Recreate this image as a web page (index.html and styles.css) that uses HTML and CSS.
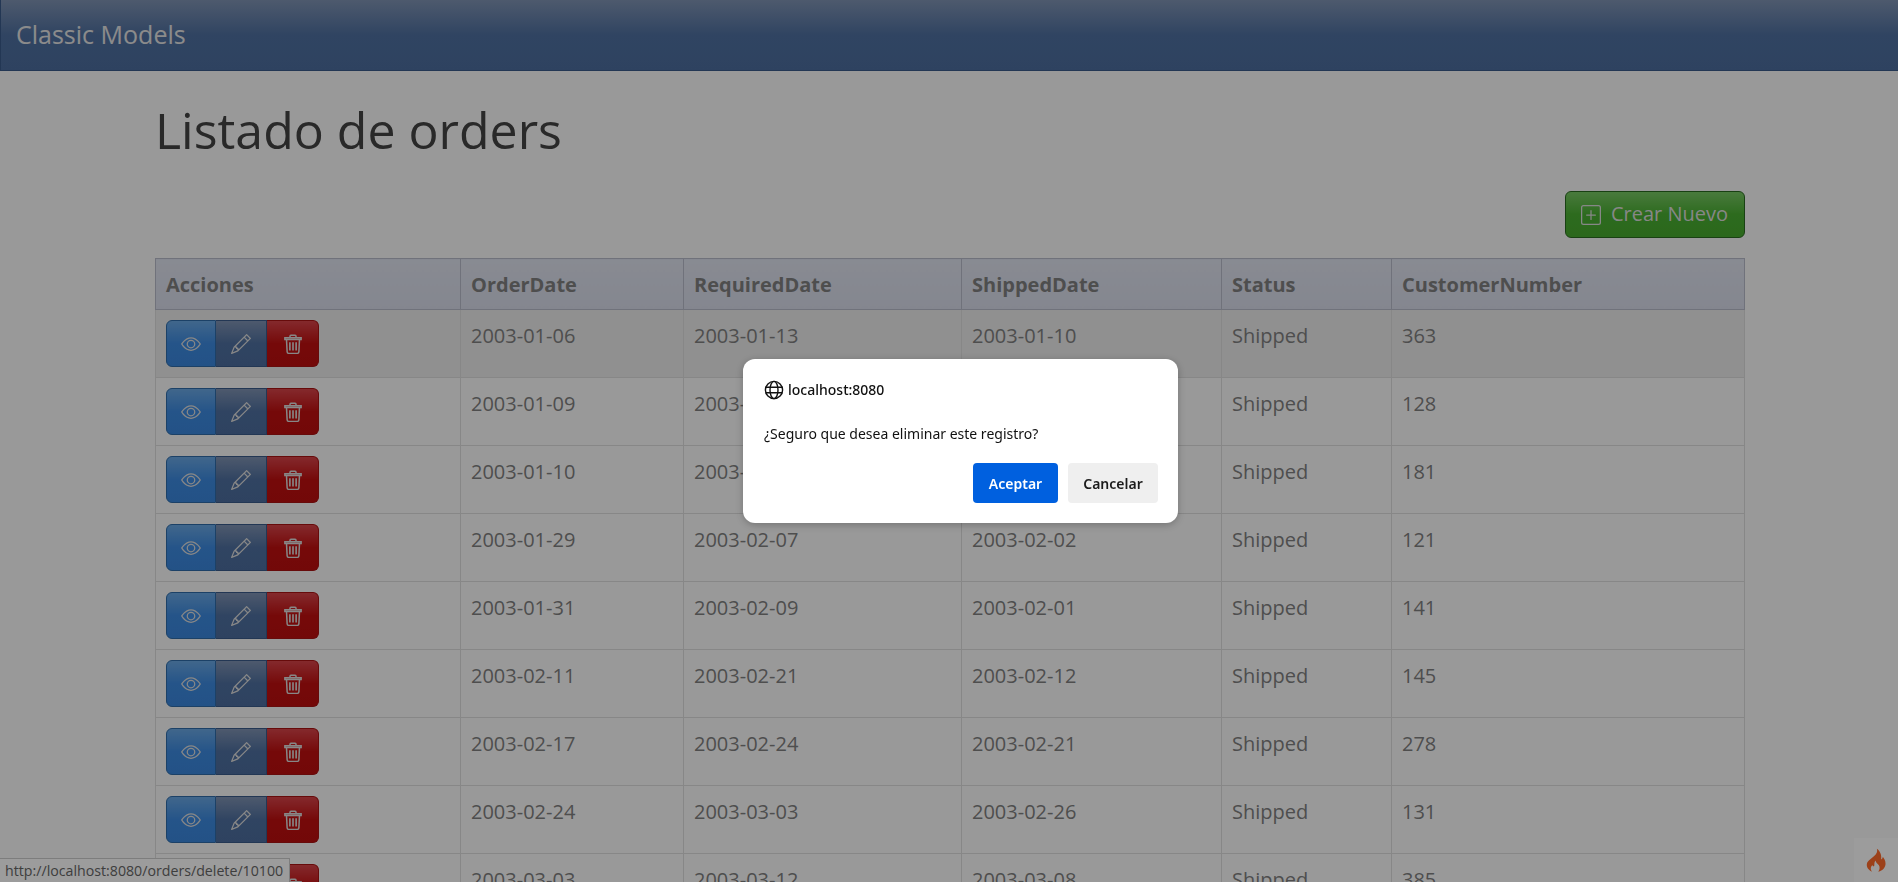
FILE: index.html
```html
<!DOCTYPE html>
<html lang="es">
<head>
  <meta charset="UTF-8" />
  <meta name="viewport" content="width=device-width, initial-scale=1.0"/>
  <title>Classic Models | Orders</title>
  <link rel="stylesheet" href="styles.css">
</head>
<body>

<svg class="icon-defs" width="0" height="0">
  <symbol id="i-eye" viewBox="0 0 16 16">
    <path fill="currentColor" d="M16 8s-3-5.5-8-5.5S0 8 0 8s3 5.5 8 5.5S16 8 16 8zM1.173 8a13.133 13.133 0 0 1 1.66-2.043C4.12 4.668 5.88 3.5 8 3.5c2.12 0 3.879 1.168 5.168 2.457A13.133 13.133 0 0 1 14.828 8c-.058.087-.122.183-.195.288-.335.48-.83 1.12-1.465 1.755C11.879 11.332 10.119 12.5 8 12.5c-2.12 0-3.879-1.168-5.168-2.457A13.134 13.134 0 0 1 1.172 8z"/>
    <path fill="currentColor" d="M8 5.5a2.5 2.5 0 1 0 0 5 2.5 2.5 0 0 0 0-5zM4.5 8a3.5 3.5 0 1 1 7 0 3.5 3.5 0 0 1-7 0z"/>
  </symbol>
  <symbol id="i-pencil" viewBox="0 0 16 16">
    <path fill="currentColor" d="M12.146.146a.5.5 0 0 1 .708 0l3 3a.5.5 0 0 1 0 .708l-10 10a.5.5 0 0 1-.168.11l-5 2a.5.5 0 0 1-.65-.65l2-5a.5.5 0 0 1 .11-.168l10-10zM11.207 2.5 13.5 4.793 14.793 3.5 12.5 1.207 11.207 2.5zm1.586 3L10.5 3.207 4 9.707V10h.5a.5.5 0 0 1 .5.5v.5h.5a.5.5 0 0 1 .5.5v.5h.293l6.5-6.5zm-9.761 5.175-.106.106-1.528 3.821 3.821-1.528.106-.106A.5.5 0 0 1 5 12.5V12h-.5a.5.5 0 0 1-.5-.5V11h-.5a.5.5 0 0 1-.468-.325z"/>
  </symbol>
  <symbol id="i-trash" viewBox="0 0 16 16">
    <path fill="none" stroke="currentColor" stroke-width="1.2" d="M1.500 3h13v1.300h-13zM5.600 3V1.700q0-.7.7-.7h3.400q.7 0 .7.7V3M2.800 4.300l.5 9.900q.1 1.300 1.400 1.300h6.600q1.300 0 1.400-1.300l.5-9.900"/>
    <path fill="none" stroke="currentColor" stroke-width="1.300" d="M5.500 6.500v6.700M8 6.500v6.700M10.500 6.500v6.700"/>
  </symbol>
  <symbol id="i-plus" viewBox="0 0 16 16">
    <path fill="currentColor" d="M14 1a1 1 0 0 1 1 1v12a1 1 0 0 1-1 1H2a1 1 0 0 1-1-1V2a1 1 0 0 1 1-1h12zM2 0a2 2 0 0 0-2 2v12a2 2 0 0 0 2 2h12a2 2 0 0 0 2-2V2a2 2 0 0 0-2-2H2z"/>
    <path fill="currentColor" d="M8 4a.5.5 0 0 1 .5.5v3h3a.5.5 0 0 1 0 1h-3v3a.5.5 0 0 1-1 0v-3h-3a.5.5 0 0 1 0-1h3v-3A.5.5 0 0 1 8 4z"/>
  </symbol>
</svg>

<nav class="navbar">
  <a class="navbar-brand" href="#">Classic Models</a>
</nav>

<div class="container">
  <h1>Listado de orders</h1>

  <div class="toolbar">
    <a class="btn btn-success" href="#"><svg class="ico"><use href="#i-plus"/></svg>Crear Nuevo</a>
  </div>

  <table class="orders">
    <colgroup>
      <col class="c-actions"><col class="c-order"><col class="c-req"><col class="c-ship"><col class="c-status"><col>
    </colgroup>
    <thead>
      <tr>
        <th>Acciones</th>
        <th>OrderDate</th>
        <th>RequiredDate</th>
        <th>ShippedDate</th>
        <th>Status</th>
        <th>CustomerNumber</th>
      </tr>
    </thead>
    <tbody id="rows"></tbody>
  </table>
</div>

<div class="status-bubble">http://localhost:8080/orders/delete/10100</div>

<div class="debug-tab">
  <svg width="20" height="25" viewBox="0 0 22 26">
    <path fill="#ff6a2b" d="M12 0c1 3.500-.5 5.500-3 8C6.500 10.500 3.500 12 1.500 15 0 18.500 1 22.500 6.500 25.500 4.500 22.500 5 20 7 18c.3 1.500 1.500 1.800 2 1 .6-1.500-.5-3.500 1.500-6 .2 2.200 2 3.200 3.500 5 1.500 2 1.200 5-.5 7.500 5-1.500 8-5 8-9 0-3-1.500-5.500-3-7.500-.2 1.500-.8 2.500-2 3C17.500 8 16 3 12 0z"/>
  </svg>
</div>

<div class="overlay">
  <div class="dialog">
    <div class="dialog-origin">
      <svg width="20" height="20" viewBox="0 0 20 20" fill="none" stroke="#111" stroke-width="1.4">
        <circle cx="10" cy="10" r="8.6"/>
        <ellipse cx="10" cy="10" rx="4" ry="8.6"/>
        <path d="M1.600 7.200h16.800M1.600 12.800h16.800"/>
      </svg>
      <span>localhost:8080</span>
    </div>
    <p class="dialog-msg">¿Seguro que desea eliminar este registro?</p>
    <div class="dialog-actions">
      <button class="dlg-btn dlg-ok">Aceptar</button>
      <button class="dlg-btn dlg-cancel">Cancelar</button>
    </div>
  </div>
</div>

<script src="app.js"></script>
</body>
</html>
```

FILE: styles.css
```css
* {
  box-sizing: border-box;
}

html, body {
  height: 100%;
}

body {
  margin: 0;
  overflow: hidden;
  background: #fbfbfb;
  color: #808080;
  font-family: "Open Sans", "Noto Sans", sans-serif;
  font-size: 20px;
  line-height: 1.42857;
}

.icon-defs {
  position: absolute;
}

.navbar {
  height: 71px;
  padding: 0 16px;
  display: flex;
  align-items: center;
  background: linear-gradient(to bottom, #7f93b3 0, #4f70a0 50%, #4c6d9e 100%);
  border: 1px solid #3a5a8a;
  border-width: 0 0 1px 1px;
}

.navbar-brand {
  color: #e4e4e4;
  font-size: 25px;
  text-decoration: none;
  margin-left: -1px;
}

.container {
  width: 1590px;
  margin-left: 155px;
}

h1 {
  margin: 0;
  padding-top: 22px;
  height: 120px;
  font-size: 50px;
  font-weight: 400;
  line-height: 74px;
  color: #444;
}

.toolbar {
  display: flex;
  justify-content: flex-end;
  margin-bottom: 20px;
}

.btn {
  display: flex;
  align-items: center;
  gap: 10px;
  height: 47px;
  padding: 0 15px;
  color: #ddd;
  text-decoration: none;
  border-radius: 6px;
  border: 1px solid #2a6b20;
}

.btn-success {
  width: 180px;
  background: linear-gradient(to bottom, #78c864 0, #4aaf32 50%, #47aa2e 100%);
}

.ico {
  width: 20px;
  height: 20px;
  flex: none;
}

.orders {
  width: 1590px;
  table-layout: fixed;
  border-collapse: collapse;
}

.c-actions { width: 305px; }
.c-order { width: 223px; }
.c-req { width: 278px; }
.c-ship { width: 260px; }
.c-status { width: 170px; }

.orders th {
  height: 51px;
  padding: 3px 10px 0;
  text-align: left;
  font-weight: 700;
  background: linear-gradient(to bottom, #dfe3ef, #d8dcea);
  border: 1px solid #b8bbca;
}

.orders td {
  height: 68px;
  padding: 12px 10px 10px;
  vertical-align: top;
  border: 1px solid #ddd;
}

.orders tr.hover td {
  background: #ebebeb;
}

.btn-group {
  display: flex;
  width: 153px;
  height: 47px;
  margin-top: -2px;
}

.btn-group a {
  display: flex;
  align-items: center;
  justify-content: center;
  color: #ddd;
  border: 1px solid transparent;
}

.btn-group .ico {
  width: 20px;
  height: 20px;
}

.act-view {
  width: 50px;
  border-radius: 6px 0 0 6px;
  background: linear-gradient(to bottom, #6aa8e4 0, #3d8ae0 50%, #3a86dc 100%);
  border-color: #2f6ba8 !important;
}

.act-edit {
  width: 51px;
  background: linear-gradient(to bottom, #7f93b3 0, #4f70a0 50%, #4c6d9e 100%);
  border-color: #3a5a8a !important;
  border-left: 0 !important;
}

.act-del {
  width: 52px;
  border-radius: 0 6px 6px 0;
  background: linear-gradient(to bottom, #d84449 0, #c01010 50%, #bc0e0e 100%);
  border-color: #a81212 !important;
  border-left: 0 !important;
}

.status-bubble {
  position: fixed;
  left: 0;
  bottom: 0;
  width: 290px;
  height: 24px;
  padding: 0 5px;
  background: #fff;
  border: 1px solid #ccc;
  border-width: 1px 1px 0 0;
  color: #666;
  font-size: 14.2px;
  line-height: 24px;
  white-space: nowrap;
}

.debug-tab {
  position: fixed;
  right: 0;
  bottom: 0;
  width: 44px;
  height: 44px;
  display: flex;
  align-items: center;
  justify-content: center;
  background: #fff;
}

.overlay {
  position: fixed;
  inset: 0;
  background: rgba(0, 0, 0, 0.39);
}

.dialog {
  position: absolute;
  left: 743px;
  top: 359px;
  width: 435px;
  height: 164px;
  padding: 21px 20px 20px 21px;
  background: #fff;
  border-radius: 12px;
  box-shadow: 0 2px 8px rgba(0, 0, 0, 0.25);
  color: #111;
  font-family: "Noto Sans", "Open Sans", sans-serif;
  font-size: 14px;
  line-height: 20px;
}

.dialog-origin {
  display: flex;
  align-items: center;
  gap: 4px;
  height: 20px;
  font-weight: 500;
}

.dialog-msg {
  margin: 24px 0 0;
  height: 20px;
}

.dialog-actions {
  display: flex;
  justify-content: flex-end;
  gap: 10px;
  margin-top: 19px;
}

.dlg-btn {
  height: 40px;
  padding: 2px 0 0;
  border: 0;
  border-radius: 4px;
  font: inherit;
  font-weight: 600;
}

.dlg-ok {
  width: 85px;
  background: #0060df;
  color: #fff;
}

.dlg-cancel {
  width: 90px;
  background: #efefef;
  color: #1b1b1b;
}
```

FILE: app.js
```js
const orders = [
  ["2003-01-06", "2003-01-13", "2003-01-10", "Shipped", 363],
  ["2003-01-09", "2003-01-18", "2003-01-11", "Shipped", 128],
  ["2003-01-10", "2003-01-18", "2003-01-14", "Shipped", 181],
  ["2003-01-29", "2003-02-07", "2003-02-02", "Shipped", 121],
  ["2003-01-31", "2003-02-09", "2003-02-01", "Shipped", 141],
  ["2003-02-11", "2003-02-21", "2003-02-12", "Shipped", 145],
  ["2003-02-17", "2003-02-24", "2003-02-21", "Shipped", 278],
  ["2003-02-24", "2003-03-03", "2003-02-26", "Shipped", 131],
  ["2003-03-03", "2003-03-12", "2003-03-08", "Shipped", 385]
];

const actions = `
  <div class="btn-group">
    <a class="act-view" href="#"><svg class="ico"><use href="#i-eye"/></svg></a>
    <a class="act-edit" href="#"><svg class="ico"><use href="#i-pencil"/></svg></a>
    <a class="act-del" href="#"><svg class="ico"><use href="#i-trash"/></svg></a>
  </div>`;

document.getElementById("rows").innerHTML = orders.map((o, i) => `
  <tr class="${i === 0 ? "hover" : ""}">
    <td>${actions}</td>
    ${o.map((v) => `<td>${v}</td>`).join("")}
  </tr>`).join("");
```
